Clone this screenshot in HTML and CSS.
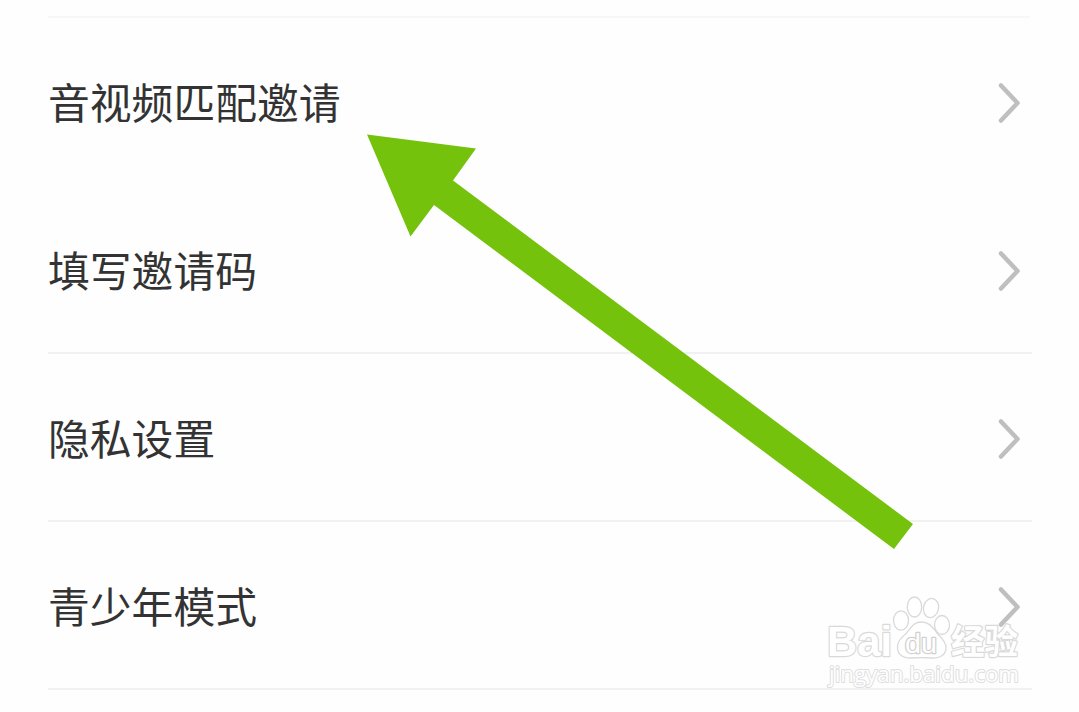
FILE: index.html
```html
<!DOCTYPE html>
<html lang="zh-CN">
<head>
<meta charset="utf-8">
<title>设置</title>
<link rel="stylesheet" href="styles.css">
</head>
<body>
<main class="screen">
  <ul class="settings">
    <li class="row row-plain"><span class="label">音视频匹配邀请</span><svg class="chevron" viewBox="0 0 26 44"><path d="M4 4.500 20.500 22 4 39.500"/></svg></li>
    <li class="row"><span class="label">填写邀请码</span><svg class="chevron" viewBox="0 0 26 44"><path d="M4 4.500 20.500 22 4 39.500"/></svg></li>
    <li class="row"><span class="label">隐私设置</span><svg class="chevron" viewBox="0 0 26 44"><path d="M4 4.500 20.500 22 4 39.500"/></svg></li>
    <li class="row"><span class="label">青少年模式</span><svg class="chevron" viewBox="0 0 26 44"><path d="M4 4.500 20.500 22 4 39.500"/></svg></li>
  </ul>
  <svg class="arrow" viewBox="0 0 1079 712"><path d="M367 134.500 476 148.500 453 180.500 913 524 894 549 434 205 410.500 236.500Z"/></svg>
  <svg class="watermark" viewBox="820 590 210 110">
    <text class="brand" x="827" y="656" textLength="65" lengthAdjust="spacingAndGlyphs">Bai</text>
    <ellipse cx="901" cy="620.500" rx="7.500" ry="9.700"/>
    <ellipse cx="914.500" cy="607" rx="7.200" ry="10"/>
    <ellipse cx="931" cy="608" rx="7.500" ry="9.700" transform="rotate(12 931 608)"/>
    <ellipse cx="942" cy="625" rx="7.500" ry="9.500"/>
    <path d="M921.500 622c-8 0-10.500 6-15 11-5 5-9.500 8-9 15 .5 7 6 10.500 13 10 7-.5 15-.5 22 0 7 .5 13.500-3 13.500-10.500 0-6-4.500-9-8.500-14-5-6-8-11.500-16-11.500Z"/>
    <text class="du" x="905" y="652.500" textLength="32" lengthAdjust="spacingAndGlyphs">du</text>
    <text class="cn" x="951" y="654" textLength="67" lengthAdjust="spacingAndGlyphs">经验</text>
    <text class="url" x="829" y="682" textLength="190" lengthAdjust="spacingAndGlyphs">jingyan.baidu.com</text>
  </svg>
</main>
</body>
</html>
```

FILE: styles.css
```css
body {
  margin: 0;
  background: #fefefe;
  font-family: "Noto Sans CJK SC", sans-serif;
}
.screen {
  position: relative;
  width: 1079px;
  height: 712px;
  overflow: hidden;
}
.settings {
  list-style: none;
  margin: 0 47px 0 48px;
  padding: 16px 0 0;
}
.settings::before {
  content: "";
  display: block;
  height: 2px;
  width: 982px;
  background: #f7f7f7;
}
.row {
  box-sizing: border-box;
  display: flex;
  align-items: center;
  justify-content: space-between;
  height: 168px;
  padding: 4px 9px 0 0;
  border-bottom: 2px solid #f1f1f1;
}
.row-plain {
  border-bottom-color: transparent;
}
.label {
  padding-bottom: 4px;
  color: #333;
  font-size: 41.8px;
  line-height: 60px;
}
.chevron {
  width: 26px;
  height: 44px;
}
.chevron path {
  fill: none;
  stroke: #bfbfbf;
  stroke-width: 4.5;
  stroke-linecap: round;
  stroke-linejoin: round;
}
.arrow {
  position: absolute;
  inset: 0;
  width: 1079px;
  height: 712px;
  fill: #75c20d;
}
.watermark {
  position: absolute;
  left: 820px;
  top: 590px;
  width: 210px;
  height: 110px;
  fill: #fff;
  stroke: #d9d9d9;
  stroke-width: 1.3;
}
.watermark text {
  paint-order: stroke;
  stroke-width: 2.4;
  stroke-linejoin: round;
}
.brand {
  font: bold 42px "Liberation Sans", sans-serif;
}
.watermark .du {
  font: 27px "Liberation Sans", sans-serif;
  stroke: #d0d0d0;
}
.cn {
  font: bold 34px "Noto Sans CJK SC", sans-serif;
}
.watermark .url {
  font: 22px "Open Sans", sans-serif;
  stroke: #dedede;
  stroke-width: 2;
}
```
